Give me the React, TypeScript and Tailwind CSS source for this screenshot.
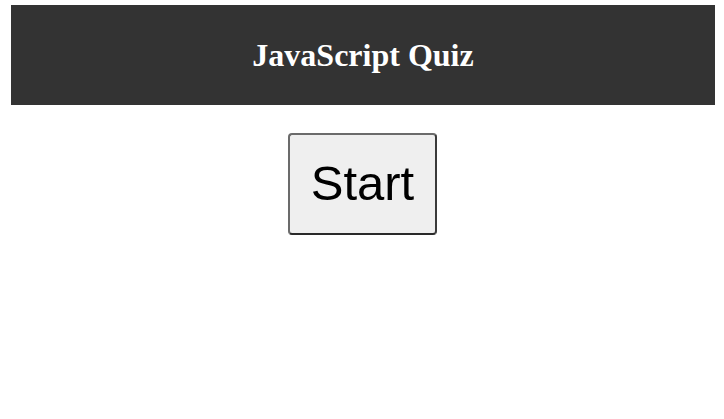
export default function App() {
  return (
    <div className="min-h-[419px] bg-white pl-[11px] pr-[9px] pt-[5px]">
      <header className="flex h-[100px] items-center justify-center bg-[#333333]">
        <h1 className="text-[32px] font-bold leading-none text-white [font-family:'Liberation_Serif',serif]">
          JavaScript Quiz
        </h1>
      </header>
      <div className="mt-[28px] flex justify-center pr-[1px]">
        <button className="h-[102px] w-[149px] rounded-[4px] border-2 border-[#6b6b6b] border-b-[#2a2a2a] border-r-[#3a3a3a] bg-[#efefef] pb-[1px] text-[49px] text-black [font-family:'Liberation_Sans',Arial,sans-serif]">
          Start
        </button>
      </div>
    </div>
  )
}
